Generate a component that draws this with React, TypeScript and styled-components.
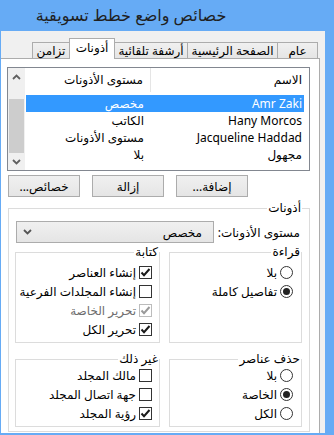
import { FC } from "react";
import styled, { createGlobalStyle } from "styled-components";

const GlobalStyle = createGlobalStyle`
  html, body {
    margin: 0;
    padding: 0;
    background: #66abf5;
  }
  body {
    font-family: "Noto Sans", "DejaVu Sans", sans-serif;
    font-size: 12px;
    color: #000;
  }
  * {
    box-sizing: border-box;
  }
`;

const Window = styled.div`
  width: 334px;
  height: 435px;
  background: #66abf5;
  display: flex;
  flex-direction: column;
  overflow: hidden;
`;

const TitleBar = styled.div`
  height: 31px;
  flex: none;
  display: flex;
  align-items: center;
  justify-content: center;
  padding: 0 72px 1px 0;
  font-size: 16px;
  color: #1f1f1f;
  white-space: nowrap;
`;

const Frame = styled.div`
  flex: 1;
  min-height: 0;
  display: flex;
  padding: 0 9px 2px 1px;
`;

const Client = styled.div`
  flex: 1;
  min-width: 0;
  background: #f0f0f0;
  padding: 7px 5px 0 0;
  display: flex;
  flex-direction: column;
  overflow: hidden;
`;

const TabStrip = styled.div`
  height: 20px;
  flex: none;
  display: flex;
  align-items: flex-end;
  padding-right: 2px;
`;

const Tab = styled.div<{ $w: number; $active?: boolean }>`
  width: ${(p) => p.$w}px;
  height: ${(p) => (p.$active ? 21 : 16)}px;
  margin-bottom: ${(p) => (p.$active ? -1 : 0)}px;
  margin-inline-start: -1px;
  &:first-child {
    margin-inline-start: 0;
  }
  border: 1px solid #acacac;
  border-bottom: none;
  background: ${(p) =>
    p.$active ? "#ffffff" : "linear-gradient(#f0f0f0, #e5e5e5)"};
  position: relative;
  z-index: ${(p) => (p.$active ? 2 : 1)};
  display: flex;
  align-items: center;
  justify-content: center;
  padding-bottom: ${(p) => (p.$active ? 3 : 0)}px;
  white-space: nowrap;
  font-size: 12px;
`;

const Panel = styled.div`
  flex: 1;
  background: #ffffff;
  border-top: 1px solid #acacac;
  border-right: 1px solid #acacac;
  padding: 8px 9px 0 5px;
  display: flex;
  flex-direction: column;
`;

const ListBox = styled.div`
  height: 104px;
  flex: none;
  margin-left: 1px;
  border: 1px solid #828790;
  display: flex;
  background: #ffffff;
`;

const ListArea = styled.div`
  flex: 1;
  display: flex;
  flex-direction: column;
`;

const HeaderRow = styled.div`
  height: 24px;
  display: grid;
  grid-template-columns: 158px 1px 1fr;
`;

const HeaderCell = styled.div`
  line-height: 23px;
  padding-right: 7px;
  white-space: nowrap;
`;

const HeaderDivider = styled.div`
  background: #e5e5e5;
`;

const Rows = styled.div`
  padding-top: 3px;
`;

const Row = styled.div<{ $selected?: boolean }>`
  height: 17px;
  margin: 0 5px 0 1px;
  display: grid;
  grid-template-columns: 154px 1fr;
  align-items: center;
  background: ${(p) => (p.$selected ? "#3399ff" : "transparent")};
  color: ${(p) => (p.$selected ? "#ffffff" : "#000000")};
  white-space: nowrap;
`;

const NameCell = styled.div`
  padding-right: 2px;
`;

const LevelCell = styled.div`
  padding-right: 6px;
`;

const ScrollBar = styled.div`
  width: 17px;
  flex: none;
  background: #f0f0f0;
  display: flex;
  flex-direction: column;
`;

const ScrollButton = styled.div`
  height: 17px;
  flex: none;
  display: flex;
  align-items: center;
  justify-content: center;
`;

const ScrollTrack = styled.div`
  flex: 1;
  display: flex;
  flex-direction: column;
  padding: 14px 1px 0 1px;
`;

const Thumb = styled.div`
  flex: 1;
  background: #cdcdcd;
`;

const ButtonRow = styled.div`
  height: 22px;
  margin-top: 4px;
  flex: none;
  display: flex;
  justify-content: flex-end;
  gap: 12px;
  padding-left: 2px;
`;

const PushButton = styled.div`
  width: 72px;
  height: 22px;
  border: 1px solid #acacac;
  background: linear-gradient(#f0f0f0, #e5e5e5);
  display: flex;
  align-items: center;
  justify-content: center;
  white-space: nowrap;
`;

const GroupBox = styled.fieldset<{
  $top?: number;
  $bottom?: number;
  $side?: number;
  $w?: number;
}>`
  margin: 0;
  min-width: 0;
  border: 1px solid #dcdcdc;
  padding: ${(p) => p.$top ?? 0}px ${(p) => p.$side ?? 0}px
    ${(p) => p.$bottom ?? 0}px ${(p) => p.$side ?? 0}px;
  ${(p) => (p.$w ? `width: ${p.$w}px; flex: none;` : "")}
`;

const Legend = styled.legend`
  padding: 0 1px;
  line-height: 14px;
  font-size: 12px;
  white-space: nowrap;
`;

const OuterGroup = styled(GroupBox)`
  margin: 4px 0 0 2px;
`;

const ComboRow = styled.div`
  height: 22px;
  display: flex;
  align-items: center;
  justify-content: space-between;
`;

const ComboLabel = styled.span`
  padding-right: 2px;
  white-space: nowrap;
`;

const Combo = styled.div`
  width: 198px;
  height: 22px;
  border: 1px solid #acacac;
  background: linear-gradient(#f0f0f0, #e5e5e5);
  display: flex;
  align-items: center;
  justify-content: space-between;
  padding: 0 11px 0 6px;
`;

const GroupRow = styled.div<{ $mt: number }>`
  display: flex;
  gap: 9px;
  margin-top: ${(p) => p.$mt}px;
`;

const Option = styled.div<{ $disabled?: boolean; $pad: number }>`
  height: 19px;
  display: flex;
  align-items: center;
  gap: 3px;
  padding-right: ${(p) => p.$pad}px;
  white-space: nowrap;
  color: ${(p) => (p.$disabled ? "#6d6d6d" : "#000000")};
`;

const Box = styled.span<{ $disabled?: boolean }>`
  width: 13px;
  height: 13px;
  flex: none;
  border: 1px solid ${(p) => (p.$disabled ? "#bcbcbc" : "#333333")};
  background: #ffffff;
  display: flex;
  align-items: center;
  justify-content: center;
`;

const Circle = styled.span`
  width: 13px;
  height: 13px;
  flex: none;
  border: 1px solid #333333;
  border-radius: 50%;
  background: #ffffff;
  display: flex;
  align-items: center;
  justify-content: center;
`;

const Dot = styled.span`
  width: 7px;
  height: 7px;
  border-radius: 50%;
  background: #222222;
`;

const Chevron: FC<{ up?: boolean; color?: string }> = ({ up, color }) => (
  <svg width="9" height="6" viewBox="0 0 9 6">
    <path
      d={up ? "M1 5 L4.5 1.5 L8 5" : "M1 1 L4.5 4.5 L8 1"}
      fill="none"
      stroke={color ?? "#606060"}
      strokeWidth="1.8"
    />
  </svg>
);

const CheckOption: FC<{
  label: string;
  checked?: boolean;
  disabled?: boolean;
}> = ({ label, checked, disabled }) => (
  <Option $pad={7} $disabled={disabled}>
    <Box $disabled={disabled}>
      {checked && (
        <svg width="11" height="11" viewBox="0 0 11 11">
          <path
            d="M1.5 5.5 L4 8.2 L9.5 2"
            fill="none"
            stroke={disabled ? "#9a9a9a" : "#1a1a1a"}
            strokeWidth="2"
          />
        </svg>
      )}
    </Box>
    {label}
  </Option>
);

const RadioOption: FC<{ label: string; checked?: boolean }> = ({
  label,
  checked,
}) => (
  <Option $pad={8}>
    <Circle>{checked && <Dot />}</Circle>
    {label}
  </Option>
);

const users = [
  { name: "Amr Zaki", level: "مخصص", selected: true },
  { name: "Hany Morcos", level: "الكاتب" },
  { name: "Jacqueline Haddad", level: "مستوى الأذونات" },
  { name: "مجهول", level: "بلا" },
];

const tabs = [
  { label: "عام", w: 41 },
  { label: "الصفحة الرئيسية", w: 91 },
  { label: "أرشفة تلقائية", w: 74 },
  { label: "أذونات", w: 46, active: true },
  { label: "تزامن", w: 38 },
];

const App: FC = () => {
  return (
    <Window>
      <GlobalStyle />
      <TitleBar dir="rtl">خصائص واضع خطط تسويقية</TitleBar>
      <Frame>
        <Client dir="rtl">
          <TabStrip>
            {tabs.map((t) => (
              <Tab key={t.label} $w={t.w} $active={t.active}>
                {t.label}
              </Tab>
            ))}
          </TabStrip>

          <Panel>
            <ListBox>
              <ListArea>
                <HeaderRow>
                  <HeaderCell>الاسم</HeaderCell>
                  <HeaderDivider />
                  <HeaderCell>مستوى الأذونات</HeaderCell>
                </HeaderRow>
                <Rows>
                  {users.map((u) => (
                    <Row key={u.name} $selected={u.selected}>
                      <NameCell>{u.name}</NameCell>
                      <LevelCell>{u.level}</LevelCell>
                    </Row>
                  ))}
                </Rows>
              </ListArea>
              <ScrollBar>
                <ScrollButton>
                  <Chevron up />
                </ScrollButton>
                <ScrollTrack>
                  <Thumb />
                </ScrollTrack>
                <ScrollButton>
                  <Chevron />
                </ScrollButton>
              </ScrollBar>
            </ListBox>

            <ButtonRow>
              <PushButton>إضافة...</PushButton>
              <PushButton>إزالة</PushButton>
              <PushButton>خصائص...</PushButton>
            </ButtonRow>

            <OuterGroup $top={6} $side={7} $bottom={4}>
              <Legend>أذونات</Legend>
              <ComboRow>
                <ComboLabel>مستوى الأذونات:</ComboLabel>
                <Combo>
                  <span>مخصص</span>
                  <Chevron color="#555555" />
                </Combo>
              </ComboRow>

              <GroupRow $mt={2}>
                <GroupBox $w={133} $top={4} $bottom={3}>
                  <Legend>قراءة</Legend>
                  <RadioOption label="بلا" />
                  <RadioOption label="تفاصيل كاملة" checked />
                </GroupBox>
                <GroupBox $w={145} $top={4} $bottom={3}>
                  <Legend>كتابة</Legend>
                  <CheckOption label="إنشاء العناصر" checked />
                  <CheckOption label="إنشاء المجلدات الفرعية" />
                  <CheckOption label="تحرير الخاصة" checked disabled />
                  <CheckOption label="تحرير الكل" checked />
                </GroupBox>
              </GroupRow>

              <GroupRow $mt={9}>
                <GroupBox $w={133} $top={0} $bottom={3}>
                  <Legend>حذف عناصر</Legend>
                  <RadioOption label="بلا" />
                  <RadioOption label="الخاصة" checked />
                  <RadioOption label="الكل" />
                </GroupBox>
                <GroupBox $w={145} $top={0} $bottom={3}>
                  <Legend>غير ذلك</Legend>
                  <CheckOption label="مالك المجلد" />
                  <CheckOption label="جهة اتصال المجلد" />
                  <CheckOption label="رؤية المجلد" checked />
                </GroupBox>
              </GroupRow>
            </OuterGroup>
          </Panel>
        </Client>
      </Frame>
    </Window>
  );
};

export default App;
